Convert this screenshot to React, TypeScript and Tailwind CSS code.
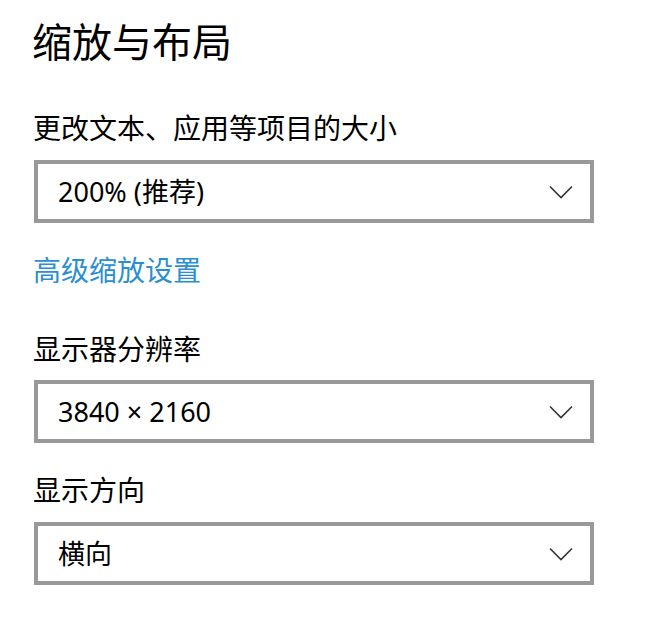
const FONT = '"Noto Sans", "Noto Sans CJK SC", sans-serif'

function Chevron() {
  return (
    <svg width="24" height="14" viewBox="0 0 24 14" fill="none" className="shrink-0">
      <path d="M1 1.5 L12 12.5 L23 1.5" stroke="#333" strokeWidth="1.6" />
    </svg>
  )
}

function Dropdown({ value, className }: { value: string; className?: string }) {
  return (
    <div
      className={`flex items-center justify-between w-[560px] h-[63px] border-4 border-[#999999] bg-white pl-[20px] pr-[17px] ${className ?? ''}`}
    >
      <span className="text-[27px] text-black leading-none">{value}</span>
      <Chevron />
    </div>
  )
}

export default function App() {
  return (
    <div className="w-[645px] h-[619px] bg-white pl-[34px] pt-[18px]" style={{ fontFamily: FONT }}>
      <h1 className="text-[40px] leading-[48px] text-black -ml-[2px]">缩放与布局</h1>

      <div className="mt-[42px] text-[28px] leading-[40px] text-black -ml-[1px]">更改文本、应用等项目的大小</div>
      <Dropdown value="200% (推荐)" className="mt-[12px]" />

      <div className="mt-[27px] text-[28px] leading-[40px] text-[#2b8fd0] -ml-[1px]">高级缩放设置</div>

      <div className="mt-[39px] text-[28px] leading-[40px] text-black -ml-[1px]">显示器分辨率</div>
      <Dropdown value="3840 × 2160" className="mt-[11px]" />

      <div className="mt-[27px] text-[28px] leading-[40px] text-black -ml-[1px]">显示方向</div>
      <Dropdown value="横向" className="mt-[12px]" />
    </div>
  )
}
